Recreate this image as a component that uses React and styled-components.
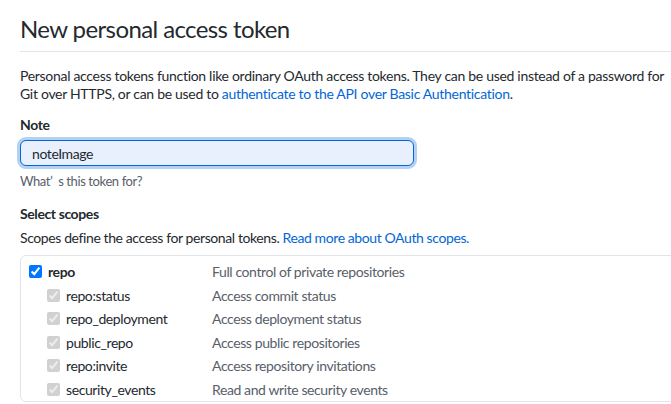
import styled, { createGlobalStyle } from "styled-components";

const GlobalStyle = createGlobalStyle`
  html, body {
    margin: 0;
    background: #fff;
    overflow: hidden;
  }
  body {
    font-family: Lato, "Noto Sans", sans-serif;
    letter-spacing: -0.4px;
    color: #24292e;
  }
`;

const scopes = [
  { name: "repo", desc: "Full control of private repositories", parent: true },
  { name: "repo:status", desc: "Access commit status" },
  { name: "repo_deployment", desc: "Access deployment status" },
  { name: "public_repo", desc: "Access public repositories" },
  { name: "repo:invite", desc: "Access repository invitations" },
  { name: "security_events", desc: "Read and write security events" },
];

const App = () => {
  return (
    <>
      <GlobalStyle />
      <Page>
        <Subhead>
          <Title>New personal access token</Title>
        </Subhead>

        <Lead>
          Personal access tokens function like ordinary OAuth access tokens. They can be used
          instead of a password for Git over HTTPS, or can be used to{" "}
          <Link href="#">authenticate to the API over Basic Authentication</Link>.
        </Lead>

        <FormGroup>
          <Label>Note</Label>
          <NoteInput defaultValue="noteImage" />
          <Hint>What’&nbsp;&nbsp;s this token for?</Hint>
        </FormGroup>

        <Label>Select scopes</Label>
        <ScopeText>
          Scopes define the access for personal tokens.{" "}
          <Link href="#">Read more about OAuth scopes.</Link>
        </ScopeText>

        <ScopeBox>
          {scopes.map((s) => (
            <ScopeRow key={s.name}>
              <ScopeName $child={!s.parent}>
                <Check
                  type="checkbox"
                  defaultChecked
                  disabled={!s.parent}
                  readOnly
                />
                <ScopeLabel $bold={s.parent}>{s.name}</ScopeLabel>
              </ScopeName>
              <ScopeDesc>{s.desc}</ScopeDesc>
            </ScopeRow>
          ))}
        </ScopeBox>
      </Page>
    </>
  );
};

const Page = styled.div`
  padding: 12px 0 0 20px;
  width: 720px;
`;

const Subhead = styled.div`
  border-bottom: 1px solid #e1e4e8;
  padding-bottom: 5px;
  margin-bottom: 15px;
`;

const Title = styled.h1`
  margin: 0;
  font-size: 24px;
  font-weight: 400;
  line-height: 34px;
  letter-spacing: -0.6px;
  color: #24292e;
`;

const Lead = styled.p`
  margin: 0 0 12px;
  width: 645px;
  font-size: 14px;
  line-height: 18px;
  letter-spacing: -0.3px;
`;

const Link = styled.a`
  color: #0366d6;
  text-decoration: none;
`;

const FormGroup = styled.div`
  margin-bottom: 14px;
`;

const Label = styled.div`
  font-size: 14px;
  font-weight: 700;
  line-height: 20px;
  margin-bottom: 5px;
`;

const NoteInput = styled.input`
  box-sizing: border-box;
  display: block;
  width: 394px;
  height: 26px;
  padding: 0 11px;
  font-family: Lato, "Noto Sans", sans-serif;
  font-size: 14px;
  letter-spacing: -0.4px;
  color: #24292e;
  background: #e8f0fe;
  border: 1px solid #0366d6;
  border-radius: 6px;
  box-shadow: 0 0 0 3px rgba(3, 102, 214, 0.3);
  outline: none;
`;

const Hint = styled.p`
  margin: 6px 0 0;
  font-size: 13px;
  line-height: 18px;
  color: #586069;
`;

const ScopeText = styled.p`
  margin: 1px 0 8px;
  font-size: 14px;
  line-height: 18px;
`;

const ScopeBox = styled.div`
  border: 1px solid #e1e4e8;
  border-radius: 6px;
  padding: 4px 0 0 8px;
`;

const ScopeRow = styled.div`
  display: grid;
  grid-template-columns: 183px 1fr;
  align-items: center;
  height: 23.5px;
`;

const ScopeName = styled.label`
  display: flex;
  align-items: center;
  padding-left: ${(p) => (p.$child ? "18px" : "0")};
`;

const Check = styled.input`
  width: 13px;
  height: 13px;
  margin: 0 6px 0 0;
`;

const ScopeLabel = styled.span`
  font-size: 14px;
  font-weight: ${(p) => (p.$bold ? 700 : 400)};
  color: #24292e;
`;

const ScopeDesc = styled.span`
  font-size: 14px;
  color: #586069;
`;

export default App;
